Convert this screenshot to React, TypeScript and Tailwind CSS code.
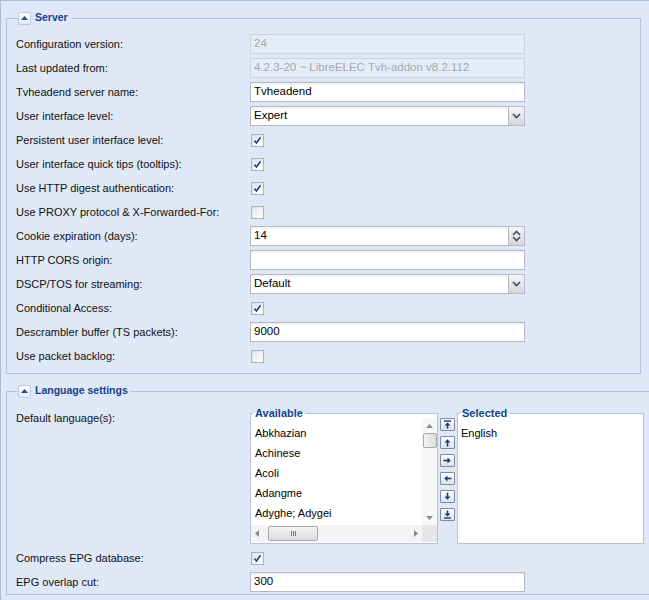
import React from "react";

const F = { fontFamily: '"Liberation Sans", Arial, sans-serif' };

function Collapse() {
  return (
    <span className="inline-flex items-center justify-center w-[13px] h-[13px] rounded-[2px] border border-[#b9c9e0] bg-gradient-to-b from-[#ffffff] to-[#e3ebf7] mr-[4px]">
      <svg width="7" height="4" viewBox="0 0 7 4"><path d="M0 4 L3.5 0 L7 4 Z" fill="#2a4a86" /></svg>
    </span>
  );
}

function Legend({ children }: { children: React.ReactNode }) {
  return (
    <legend className="ml-[2px] pr-[3px] flex items-center h-[14px]">
      <Collapse />
      <span className="text-[10.5px] font-bold text-[#15428b]">{children}</span>
    </legend>
  );
}

function Row({ label, children }: { label?: string; children?: React.ReactNode }) {
  return (
    <div className="flex items-center h-[24px]">
      <div className="w-[234px] shrink-0 text-[11px] text-[#111]">{label}</div>
      <div className="flex items-center">{children}</div>
    </div>
  );
}

function TextInput({ value, disabled }: { value: string; disabled?: boolean }) {
  if (disabled)
    return (
      <div className="w-[275px] h-[20px] border border-[#c8d3e4] bg-[#e5ecf8] flex items-center pl-[3px] text-[11.5px] text-[#a4a8ae]">
        {value}
      </div>
    );
  return (
    <div className="w-[275px] h-[20px] border border-[#b5b8c8] bg-white bg-gradient-to-b from-[#eeeeee] to-[#ffffff] to-[3px] flex items-center pl-[3px] text-[11.5px] text-[#000]">
      {value}
    </div>
  );
}

function Trigger({ spin }: { spin?: boolean }) {
  return (
    <div className="w-[17px] h-[20px] -my-[1px] -mr-[1px] border border-[#b5b8c8] bg-gradient-to-b from-[#f6f6f6] to-[#d6d6d6] flex flex-col items-center justify-center">
      {spin ? (
        <>
          <svg width="9" height="6" viewBox="0 0 9 6"><path d="M1 5 L4.5 1.5 L8 5" fill="none" stroke="#3d4f6e" strokeWidth="1.6" /></svg>
          <svg width="9" height="6" viewBox="0 0 9 6"><path d="M1 1 L4.5 4.5 L8 1" fill="none" stroke="#3d4f6e" strokeWidth="1.6" /></svg>
        </>
      ) : (
        <svg width="9" height="6" viewBox="0 0 9 6"><path d="M1 1 L4.5 4.5 L8 1" fill="none" stroke="#3d4f6e" strokeWidth="1.6" /></svg>
      )}
    </div>
  );
}

function Combo({ value, spin }: { value: string; spin?: boolean }) {
  return (
    <div className="w-[275px] h-[20px] border border-[#b5b8c8] bg-white bg-gradient-to-b from-[#eeeeee] to-[#ffffff] to-[3px] flex items-center text-[11.5px] text-[#000]">
      <div className="flex-1 pl-[3px]">{value}</div>
      <Trigger spin={spin} />
    </div>
  );
}

function Check({ checked }: { checked?: boolean }) {
  return (
    <div className="ml-[1px] w-[13px] h-[13px] border border-[#a9b1bd] bg-gradient-to-br from-[#dfe3ea] to-[#ffffff] flex items-center justify-center">
      {checked && (
        <svg width="9" height="9" viewBox="0 0 9 9"><path d="M1.5 4.5 L3.5 7 L7.5 1.2" fill="none" stroke="#2b3f7a" strokeWidth="1.6" /></svg>
      )}
    </div>
  );
}

function SmallBtn({ kind }: { kind: string }) {
  const stroke = "#1f3b73";
  let icon: React.ReactNode = null;
  if (kind === "top")
    icon = (<svg width="9" height="9" viewBox="0 0 9 9"><path d="M1 1 H8" stroke={stroke} strokeWidth="1.4" /><path d="M4.5 3 V8.5" stroke={stroke} strokeWidth="1.6" /><path d="M1.5 5.5 L4.5 2.5 L7.5 5.5 Z" fill={stroke} /></svg>);
  if (kind === "up")
    icon = (<svg width="9" height="9" viewBox="0 0 9 9"><path d="M4.5 3 V8.5" stroke={stroke} strokeWidth="1.6" /><path d="M1.5 4.5 L4.5 1.2 L7.5 4.5 Z" fill={stroke} /></svg>);
  if (kind === "right")
    icon = (<svg width="9" height="9" viewBox="0 0 9 9"><path d="M0.5 4.5 H6" stroke={stroke} strokeWidth="1.6" /><path d="M4.5 1.5 L7.8 4.5 L4.5 7.5 Z" fill={stroke} /></svg>);
  if (kind === "left")
    icon = (<svg width="9" height="9" viewBox="0 0 9 9"><path d="M3 4.5 H8.5" stroke={stroke} strokeWidth="1.6" /><path d="M4.5 1.5 L1.2 4.5 L4.5 7.5 Z" fill={stroke} /></svg>);
  if (kind === "down")
    icon = (<svg width="9" height="9" viewBox="0 0 9 9"><path d="M4.5 0.5 V6" stroke={stroke} strokeWidth="1.6" /><path d="M1.5 4.5 L4.5 7.8 L7.5 4.5 Z" fill={stroke} /></svg>);
  if (kind === "bottom")
    icon = (<svg width="9" height="9" viewBox="0 0 9 9"><path d="M4.5 0.5 V6" stroke={stroke} strokeWidth="1.6" /><path d="M1.5 3.5 L4.5 6.5 L7.5 3.5 Z" fill={stroke} /><path d="M1 8 H8" stroke={stroke} strokeWidth="1.4" /></svg>);
  return (
    <div className="w-[15px] h-[13px] border border-[#7d8ba3] rounded-[1px] bg-gradient-to-b from-[#ffffff] to-[#d9e2ef] flex items-center justify-center">
      {icon}
    </div>
  );
}

function Tri({ dir }: { dir: "up" | "down" | "left" | "right" }) {
  const d =
    dir === "up" ? "M0 4 L3.5 0 L7 4 Z" :
    dir === "down" ? "M0 0 L3.5 4 L7 0 Z" :
    dir === "left" ? "M4 0 L0 3.5 L4 7 Z" : "M0 0 L4 3.5 L0 7 Z";
  const w = dir === "up" || dir === "down" ? 7 : 4;
  const h = dir === "up" || dir === "down" ? 4 : 7;
  return <svg width={w} height={h} viewBox={`0 0 ${w} ${h}`}><path d={d} fill="#8a8a8a" /></svg>;
}

function BoxLegend({ children }: { children: React.ReactNode }) {
  return (
    <legend className="ml-[2px] px-[2px] text-[11px] font-bold text-[#15428b] leading-[12px]">{children}</legend>
  );
}

export default function App() {
  const langs = ["Abkhazian", "Achinese", "Acoli", "Adangme", "Adyghe; Adygei"];
  return (
    <div style={F} className="w-[649px] h-[600px] overflow-hidden bg-[#dfe8f6] border-l border-t border-[#a9bfd6] pl-[5px] pt-[10px]">
      <fieldset className="w-[635px] border border-[#b5c3d6] pl-[9px] pt-[7px] pb-[5px]">
        <Legend>Server</Legend>
        <Row label="Configuration version:"><TextInput value="24" disabled /></Row>
        <Row label="Last updated from:"><TextInput value="4.2.3-20 ~ LibreELEC Tvh-addon v8.2.112" disabled /></Row>
        <Row label="Tvheadend server name:"><TextInput value="Tvheadend" /></Row>
        <Row label="User interface level:"><Combo value="Expert" /></Row>
        <Row label="Persistent user interface level:"><Check checked /></Row>
        <Row label="User interface quick tips (tooltips):"><Check checked /></Row>
        <Row label="Use HTTP digest authentication:"><Check checked /></Row>
        <Row label="Use PROXY protocol & X-Forwarded-For:"><Check /></Row>
        <Row label="Cookie expiration (days):"><Combo value="14" spin /></Row>
        <Row label="HTTP CORS origin:"><TextInput value="" /></Row>
        <Row label="DSCP/TOS for streaming:"><Combo value="Default" /></Row>
        <Row label="Conditional Access:"><Check checked /></Row>
        <Row label="Descrambler buffer (TS packets):"><TextInput value="9000" /></Row>
        <Row label="Use packet backlog:"><Check /></Row>
      </fieldset>

      <fieldset className="mt-[10px] w-[700px] border border-[#b5c3d6] pl-[9px] pt-[9px]">
        <Legend>Language settings</Legend>
        <div className="flex items-start">
          <div className="w-[234px] shrink-0 text-[11px] text-[#111] pt-[3px]">Default language(s):</div>
          <div className="flex items-start">
            <fieldset className="w-[188px] h-[137px] border border-[#b5c3d6] bg-white flex flex-col">
              <BoxLegend>Available</BoxLegend>
              <div className="flex flex-1">
                <div className="flex-1 pt-[4px]">
                  {langs.map((l) => (
                    <div key={l} className="h-[20px] flex items-center pl-[4px] text-[11px] text-[#000]">{l}</div>
                  ))}
                </div>
                <div className="w-[15px] bg-[#f7f7f7] flex flex-col items-center justify-between py-[5px]">
                  <div className="flex flex-col items-center">
                    <Tri dir="up" />
                    <div className="mt-[5px] w-[14px] h-[15px] border border-[#a8a8a8] rounded-[2px] bg-gradient-to-r from-[#f4f4f4] to-[#dcdcdc]" />
                  </div>
                  <Tri dir="down" />
                </div>
              </div>
              <div className="h-[17px] flex bg-[#f4f4f4] mb-[1px]">
                <div className="flex-1 flex items-center px-[4px]">
                  <Tri dir="left" />
                  <div className="ml-[9px] w-[50px] h-[15px] border border-[#a8a8a8] rounded-[2px] bg-gradient-to-b from-[#f4f4f4] to-[#dcdcdc] flex items-center justify-center gap-[1px]">
                    <div className="w-[1px] h-[5px] bg-[#777]" />
                    <div className="w-[1px] h-[5px] bg-[#777]" />
                    <div className="w-[1px] h-[5px] bg-[#777]" />
                  </div>
                  <div className="flex-1" />
                  <Tri dir="right" />
                </div>
                <div className="w-[15px] bg-[#e6e6e6]" />
              </div>
            </fieldset>
            <div className="w-[19px] flex flex-col items-center gap-[5px] pt-[11px]">
              <SmallBtn kind="top" />
              <SmallBtn kind="up" />
              <SmallBtn kind="right" />
              <SmallBtn kind="left" />
              <SmallBtn kind="down" />
              <SmallBtn kind="bottom" />
            </div>
            <fieldset className="w-[187px] h-[137px] border border-[#b5c3d6] bg-white">
              <BoxLegend>Selected</BoxLegend>
              <div className="pt-[4px]">
                <div className="h-[20px] flex items-center pl-[3px] text-[11px] text-[#000]">English</div>
              </div>
            </fieldset>
          </div>
        </div>
        <div className="mt-[2px]">
          <Row label="Compress EPG database:"><Check checked /></Row>
          <Row label="EPG overlap cut:"><TextInput value="300" /></Row>
        </div>
      </fieldset>
    </div>
  );
}
